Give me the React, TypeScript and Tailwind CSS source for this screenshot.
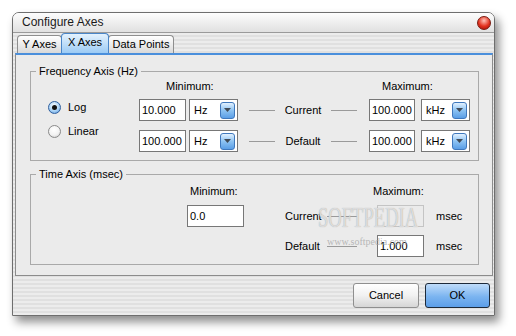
import React from 'react';

const STRIPES =
  'bg-[image:repeating-linear-gradient(180deg,#ececec_0px,#ececec_2px,#e0e0e0_2px,#e0e0e0_4px)]';

const Radio = ({ checked, label }: { checked?: boolean; label: string }) => (
  <div className="flex items-center h-[14px]">
    <span
      className={`w-[13px] h-[13px] rounded-full border flex items-center justify-center ${
        checked
          ? 'border-[#2f5f9e] bg-[image:radial-gradient(circle_at_45%_35%,#ffffff,#a9d2f6_55%,#4f8fd6)]'
          : 'border-[#8a8a8a] bg-[image:radial-gradient(circle_at_45%_35%,#ffffff,#f2f2f2_55%,#c4c4c4)]'
      }`}
    >
      {checked && <span className="w-[5px] h-[5px] rounded-full bg-[#111]" />}
    </span>
    <span className="ml-[7px]">{label}</span>
  </div>
);

const Field = ({ value, w, disabled }: { value?: string; w: string; disabled?: boolean }) => (
  <div
    className={`h-[22px] border flex items-center pl-[2px] ${w} ${
      disabled ? 'bg-[#ebebeb] border-[#c4c4c4]' : 'bg-white border-[#777]'
    }`}
  >
    {value}
  </div>
);

const Combo = ({ unit }: { unit: string }) => (
  <div className="w-[49px] h-[22px] border border-[#777] bg-white flex items-center justify-between pl-[4px] pr-[2px]">
    <span>{unit}</span>
    <span className="w-[15px] h-[17px] rounded-[3px] border border-[#3f78bd] bg-[image:linear-gradient(180deg,#e2f1ff,#8cc2f2_50%,#5a9ee6)] flex items-center justify-center">
      <svg width="7" height="4" viewBox="0 0 7 4">
        <path d="M0 0h7L3.5 4z" fill="#404a56" />
      </svg>
    </span>
  </div>
);

const Line = ({ w }: { w: string }) => <div className={`h-px bg-[#9a9a9a] ${w}`} />;

const FreqRow = ({ min, minUnit, label, max, maxUnit }: { min: string; minUnit: string; label: string; max: string; maxUnit: string }) => (
  <div className="flex items-center h-[22px]">
    <Field value={min} w="w-[47px]" />
    <div className="ml-[3px]">
      <Combo unit={minUnit} />
    </div>
    <div className="ml-[11px] w-[108px] flex items-center">
      <Line w="flex-1" />
      <span className="w-[56px] text-center">{label}</span>
      <Line w="flex-1" />
    </div>
    <div className="ml-[12px]">
      <Field value={max} w="w-[46px]" />
    </div>
    <div className="ml-[6px]">
      <Combo unit={maxUnit} />
    </div>
  </div>
);

const Tab = ({ label, active, w }: { label: string; active?: boolean; w: string }) => (
  <div
    className={`-ml-px first:ml-0 flex items-center justify-center rounded-t-[4px] border border-b-0 ${w} ${
      active
        ? 'h-[20px] pb-[2px] border-[#4a86c8] bg-[image:linear-gradient(180deg,#e4f2fe,#9ccbf4)] z-10'
        : 'h-[18px] border-[#8e8e8e] bg-[image:linear-gradient(180deg,#ffffff,#d9d9d9)]'
    }`}
  >
    {label}
  </div>
);

const GroupBox = ({ title, className, children }: { title: string; className: string; children: React.ReactNode }) => (
  <fieldset className={`border border-[#a9a9a9] ${className}`}>
    <legend className="ml-[5px] px-[3px] leading-[13px]">{title}</legend>
    {children}
  </fieldset>
);

export default function App() {
  return (
    <div className="relative w-[516px] h-[336px] bg-white pt-[12px] pl-[12px] font-['Liberation_Sans',Arial,sans-serif] text-[11px] text-black leading-[13px]">
      <div className="w-[483px] h-[304px] flex flex-col border border-[#6e6e6e] rounded-t-[7px] shadow-[4px_6px_10px_rgba(0,0,0,0.45)]">
        {/* title bar */}
        <div className="h-[20px] flex items-center justify-between pl-[9px] pr-[3px] border-b border-[#9a9a9a] rounded-t-[6px] bg-[image:linear-gradient(180deg,#fdfdfd,#e0e0e0)]">
          <span className="text-[12px] text-[#1a1a1a]">Configure Axes</span>
          <span className="w-[14px] h-[14px] rounded-full border border-[#7a1a10] bg-[image:radial-gradient(circle_at_50%_30%,#ffc2b8,#e3321f_55%,#9c0c04)]" />
        </div>

        <div className={`flex-1 flex flex-col ${STRIPES}`}>
          {/* tabs */}
          <div className="h-[20px] flex items-end pl-[4px]">
            <Tab label="Y Axes" w="w-[45px]" />
            <Tab label="X Axes" w="w-[48px]" active />
            <Tab label="Data Points" w="w-[66px]" />
          </div>

          {/* tab panel */}
          <div className="ml-[2px] mr-[1px] h-[223px] border border-t-2 border-[#8c8c8c] border-t-[#4a8fdc] bg-[#ebebeb] pl-[14px] pr-[13px]">
            <GroupBox title="Frequency Axis (Hz)" className="mt-[10px] h-[96px]">
              <div className="flex">
                <div className="w-[108px] pl-[17px] pt-[22px] flex flex-col gap-[10px]">
                  <Radio checked label="Log" />
                  <Radio label="Linear" />
                </div>
                <div className="flex flex-col">
                  <div className="flex mt-[2px]">
                    <span className="w-[243px] pl-[27px]">Minimum:</span>
                    <span>Maximum:</span>
                  </div>
                  <div className="mt-[6px] flex flex-col gap-[9px]">
                    <FreqRow min="10.000" minUnit="Hz" label="Current" max="100.000" maxUnit="kHz" />
                    <FreqRow min="100.000" minUnit="Hz" label="Default" max="100.000" maxUnit="kHz" />
                  </div>
                </div>
              </div>
            </GroupBox>

            <GroupBox title="Time Axis (msec)" className="mt-[7px] h-[97px]">
              <div className="flex mt-[4px]">
                <span className="w-[342px] pl-[159px]">Minimum:</span>
                <span>Maximum:</span>
              </div>
              <div className="mt-[7px] flex items-center h-[22px]">
                <div className="w-[156px]" />
                <Field value="0.0" w="w-[57px]" />
                <div className="w-[41px]" />
                <span className="w-[42px]">Current</span>
                <Line w="w-[30px]" />
                <div className="w-[20px]" />
                <Field w="w-[47px]" disabled />
                <span className="ml-[12px]">msec</span>
              </div>
              <div className="mt-[8px] flex items-center h-[22px]">
                <div className="w-[254px]" />
                <span className="w-[42px]">Default</span>
                <Line w="w-[30px]" />
                <div className="w-[20px]" />
                <Field value="1.000" w="w-[47px]" />
                <span className="ml-[12px]">msec</span>
              </div>
            </GroupBox>
          </div>

          {/* buttons */}
          <div className="mt-[7px] flex justify-end gap-[6px] pr-[4px]">
            <button className="w-[66px] h-[25px] rounded-[3px] border border-[#8f8f8f] bg-[image:linear-gradient(180deg,#ffffff,#f1f1f1_50%,#d6d6d6)]">
              Cancel
            </button>
            <button className="w-[65px] h-[25px] rounded-[3px] border border-[#1d2a3a] bg-[image:linear-gradient(180deg,#bfdcfa,#7bb4f0_55%,#5c9ee8)]">
              OK
            </button>
          </div>
        </div>
      </div>

      {/* watermark */}
      <div className="pointer-events-none absolute left-[318px] top-[202px] text-[30px] leading-[30px] font-['Liberation_Serif',serif] text-[#f6f6f6]/70 [text-shadow:0_0_1px_#9a9a9a] scale-x-[0.62] origin-left whitespace-nowrap">
        SOFTPEDIA
      </div>
      <div className="pointer-events-none absolute left-[327px] top-[235px] text-[10px] font-['Liberation_Serif',serif] text-[#a8a8a8]/80 whitespace-nowrap">
        www.softpedia.com
      </div>
    </div>
  );
}
